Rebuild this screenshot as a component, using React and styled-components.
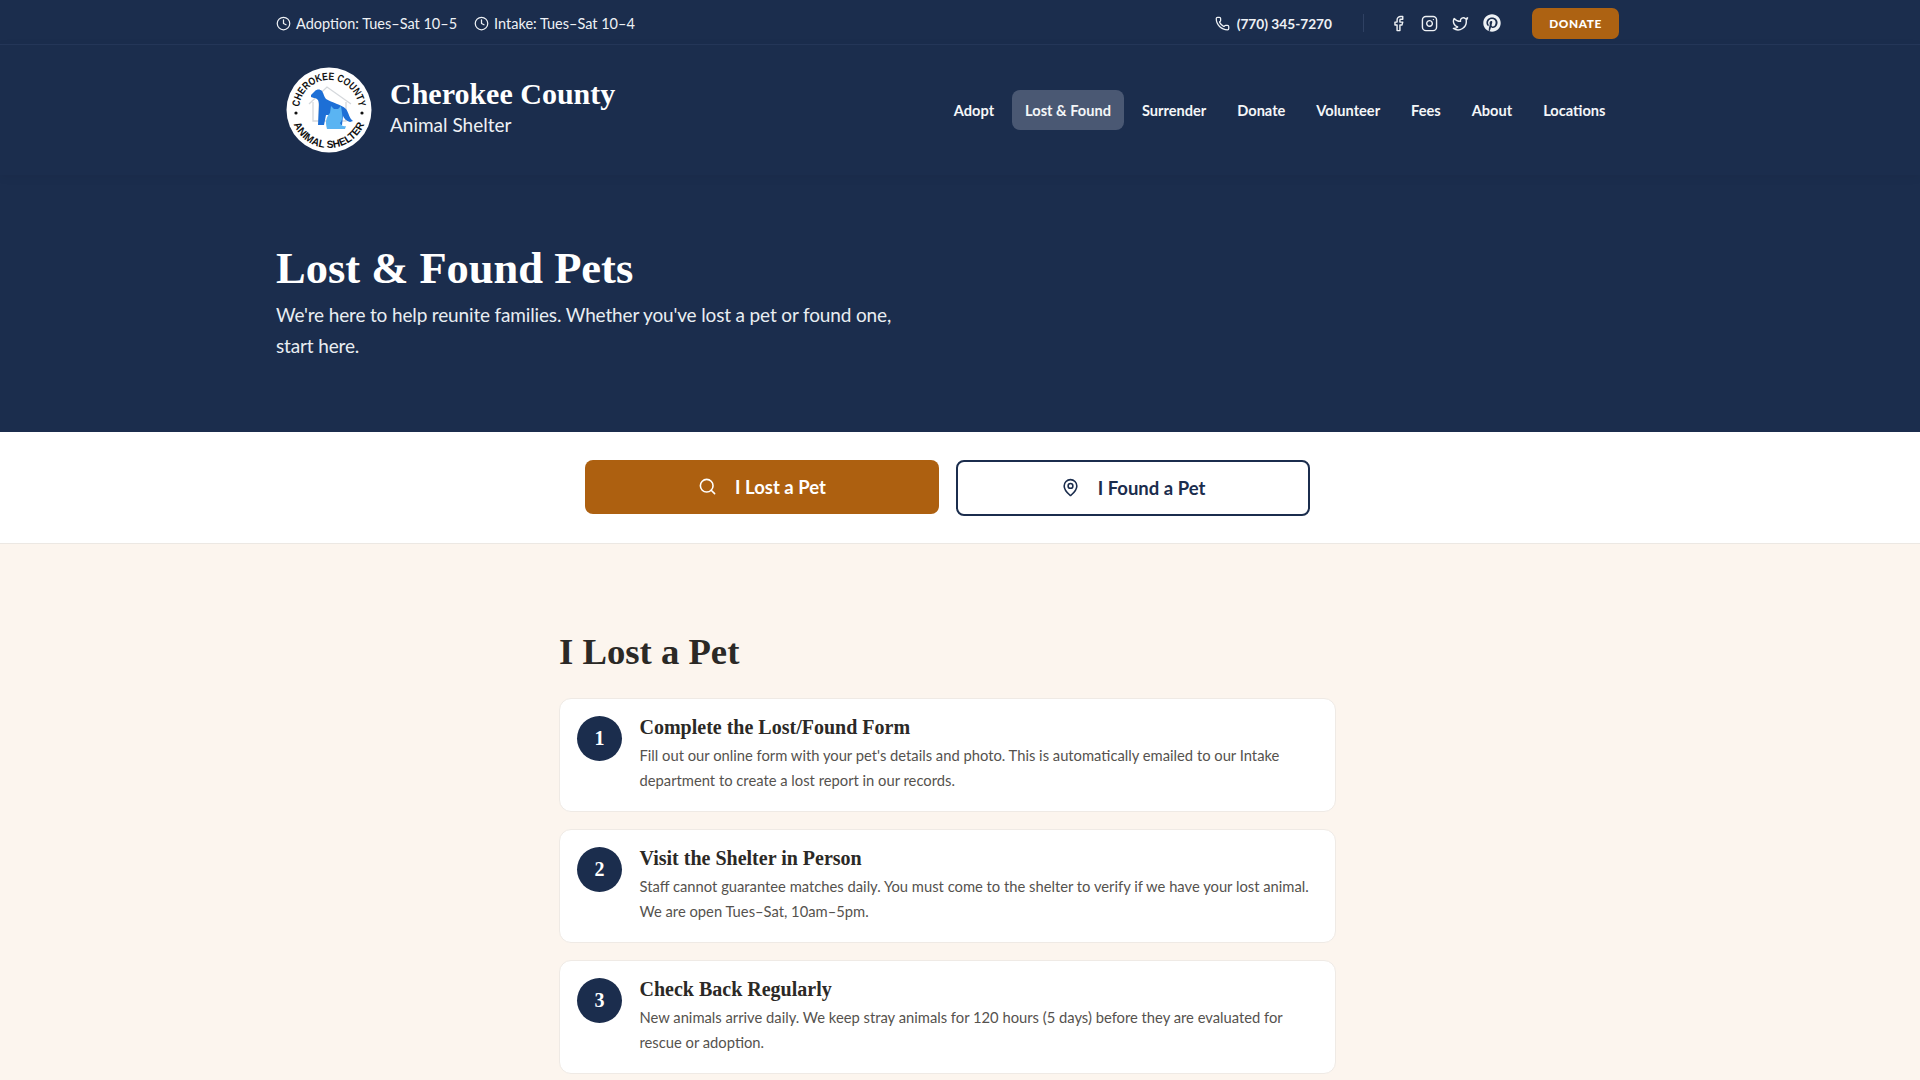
import React from "react";
import styled, { createGlobalStyle } from "styled-components";
import { Clock, Phone, Facebook, Instagram, Twitter, Search, MapPin } from "lucide-react";
import { FaPinterest } from "react-icons/fa";

const SANS = `"Lato", "Liberation Sans", sans-serif`;
const SERIF = `"Liberation Serif", "DejaVu Serif", serif`;

const Global = createGlobalStyle`
  html, body { margin: 0; padding: 0; background: #fcf5ee; }
  body { font-family: ${SANS}; height: 1080px; overflow: hidden; }
  * { box-sizing: border-box; }
`;

const Navy = styled.div`
  background: #1b2d4d;
  color: #fff;
`;

const TopBar = styled.div`
  height: 45px;
  border-bottom: 1px solid #25375a;
  padding: 2px 301px 0 276px;
  display: flex;
  align-items: center;
  justify-content: space-between;
`;

const TopGroup = styled.div`
  display: flex;
  align-items: center;
`;

const TopItem = styled.span`
  display: flex;
  align-items: center;
  gap: ${(p) => (p.$phone ? 7 : 5)}px;
  font-size: ${(p) => (p.$phone ? 13.7 : 14.5)}px;
  color: #eef1f5;
  margin-right: ${(p) => p.$mr || 0}px;
  font-weight: ${(p) => (p.$phone ? 700 : 400)};
`;

const Divider = styled.span`
  width: 1px;
  height: 18px;
  background: #2f4163;
  margin: 0 19px 0 31px;
`;

const Social = styled.a`
  width: 31px;
  display: flex;
  justify-content: center;
  color: #eef1f5;
`;

const DonateBtn = styled.button`
  width: 87px;
  height: 31px;
  margin-left: 25px;
  border: none;
  border-radius: 7px;
  background: #ad6212;
  color: #fff;
  font-family: ${SANS};
  font-size: 11.8px;
  font-weight: 900;
  letter-spacing: 0.6px;
`;

const Header = styled.header`
  height: 130px;
  padding: 0 301px 0 276px;
  display: flex;
  align-items: center;
  justify-content: space-between;
  box-shadow: 0 2px 10px rgba(0, 0, 0, 0.06);
`;

const Brand = styled.div`
  display: flex;
  align-items: center;
  gap: 18px;
  padding-left: 10px;
`;

const BrandText = styled.div`
  padding-bottom: 8px;
`;

const BrandName = styled.div`
  font-family: ${SERIF};
  font-weight: 700;
  font-size: 30px;
  line-height: 38px;
`;

const BrandSub = styled.div`
  font-size: 19px;
  line-height: 24px;
  color: #eef1f5;
`;

const Nav = styled.nav`
  display: flex;
  align-items: center;
  gap: 4px;
`;

const NavLink = styled.a`
  height: 40px;
  padding: 0 13.5px;
  border-radius: 8px;
  display: flex;
  align-items: center;
  font-size: 14.6px;
  font-weight: 700;
  color: #f4f6f8;
  background: ${(p) => (p.$active ? "#4a5873" : "transparent")};
`;

const Hero = styled.section`
  height: 257px;
  padding: 65px 276px 0;
`;

const HeroTitle = styled.h1`
  margin: 0;
  font-family: ${SERIF};
  font-size: 44.5px;
  line-height: 56px;
  font-weight: 700;
`;

const HeroText = styled.p`
  margin: 3px 0 0;
  width: 640px;
  font-size: 19px;
  letter-spacing: -0.15px;
  line-height: 31px;
  color: #e9edf2;
`;

const TabBar = styled.div`
  height: 112px;
  background: #fff;
  border-bottom: 1px solid #ece8e3;
  display: flex;
  align-items: center;
  justify-content: center;
  gap: 17px;
  padding-right: 25px;
`;

const TabButton = styled.button`
  width: 354px;
  height: ${(p) => (p.$primary ? 54 : 56)}px;
  margin-top: ${(p) => (p.$primary ? -2 : 0)}px;
  border-radius: 8px;
  border: ${(p) => (p.$primary ? "none" : "2px solid #1b2d4d")};
  background: ${(p) => (p.$primary ? "#ad6010" : "#fff")};
  color: ${(p) => (p.$primary ? "#fff" : "#1b2d4d")};
  display: flex;
  align-items: center;
  justify-content: center;
  gap: 18px;
  font-family: ${SANS};
  font-size: 18.5px;
  font-weight: 700;
`;

const Main = styled.main`
  width: 777px;
  margin-left: 559px;
  padding-top: 82px;
`;

const SectionTitle = styled.h2`
  margin: 0 0 20px;
  font-family: ${SERIF};
  font-size: 36.7px;
  line-height: 52px;
  font-weight: 700;
  color: #2b2926;
`;

const Steps = styled.div`
  display: flex;
  flex-direction: column;
  gap: 17px;
`;

const StepCard = styled.article`
  height: 114px;
  background: #fff;
  border: 1px solid #efeae5;
  border-radius: 12px;
  padding: 17px 15px 0 17px;
  display: flex;
  gap: 17.5px;
`;

const StepNumber = styled.div`
  flex: none;
  width: 45px;
  height: 45px;
  border-radius: 50%;
  background: #1b2d4d;
  color: #fff;
  display: flex;
  align-items: center;
  justify-content: center;
  font-family: ${SERIF};
  font-size: 20px;
  font-weight: 700;
`;

const StepTitle = styled.h3`
  margin: -1px 0 0;
  font-family: ${SERIF};
  font-size: 20px;
  line-height: 24px;
  font-weight: 700;
  color: #2b2926;
`;

const StepText = styled.p`
  margin: 4px 0 0;
  font-size: 14.75px;
  line-height: 25px;
  color: #55524e;
`;

const Logo = () => (
  <svg width="86" height="86" viewBox="0 0 86 86">
    <defs>
      <path id="arcTop" d="M13 43 A30 30 0 0 1 73 43" />
      <path id="arcBottom" d="M5 43 A38 38 0 0 0 81 43" />
    </defs>
    <circle cx="43" cy="43" r="42.5" fill="#fff" />
    <path d="M23 37 L41 20 L65 37 M27 35 V54 H60 V35 M33 30 V54" fill="none" stroke="#d5d8dc" strokeWidth="1.3" />
    <path
      d="M25 28 L29 24 C31 22 34 22 36 24 C38 27 38 30 40 32 C46 36 55 37 60 42 C63 46 63 51 67 54 L64 55 C60 54 58 51 57 49 L56 58 H50 L48 48 L40 48 L38 58 H32 L33 38 C33 33 31 31 28 31 L25 30 Z"
      fill="#1d6fd6"
    />
    <path
      d="M44 46 L45 39 L48 42 H52 L55 39 L56 46 C57 50 56 54 54 56 C55 58 57 60 60 59 L59 62 H41 C39 55 40 50 44 46 Z"
      fill="#5ab4f2"
    />
    <text fontFamily="Liberation Sans" fontSize="10.5" fontWeight="700" fill="#111">
      <textPath href="#arcTop" startOffset="50%" textAnchor="middle" textLength="88" lengthAdjust="spacingAndGlyphs">CHEROKEE COUNTY</textPath>
    </text>
    <text fontFamily="Liberation Sans" fontSize="10.5" fontWeight="700" fill="#111">
      <textPath href="#arcBottom" startOffset="50%" textAnchor="middle" textLength="90" lengthAdjust="spacingAndGlyphs">ANIMAL SHELTER</textPath>
    </text>
    <circle cx="10" cy="46" r="1.6" fill="#111" />
    <circle cx="76" cy="46" r="1.6" fill="#111" />
  </svg>
);

const navItems = ["Adopt", "Lost & Found", "Surrender", "Donate", "Volunteer", "Fees", "About", "Locations"];

const steps = [
  {
    title: "Complete the Lost/Found Form",
    lines: "Fill out our online form with your pet's details and photo. This is automatically emailed to our Intake department to create a lost report in our records.",
  },
  {
    title: "Visit the Shelter in Person",
    lines: "Staff cannot guarantee matches daily. You must come to the shelter to verify if we have your lost animal. We are open Tues–Sat, 10am–5pm.",
  },
  {
    title: "Check Back Regularly",
    lines: "New animals arrive daily. We keep stray animals for 120 hours (5 days) before they are evaluated for rescue or adoption.",
  },
];

export default function App() {
  return (
    <>
      <Global />
      <Navy>
        <TopBar>
          <TopGroup>
            <TopItem $mr={17}><Clock size={15} />Adoption: Tues–Sat 10–5</TopItem>
            <TopItem><Clock size={15} />Intake: Tues–Sat 10–4</TopItem>
          </TopGroup>
          <TopGroup>
            <TopItem $phone><Phone size={15} />(770) 345-7270</TopItem>
            <Divider />
            <Social><Facebook size={17} /></Social>
            <Social><Instagram size={17} /></Social>
            <Social><Twitter size={17} /></Social>
            <Social><FaPinterest size={18} /></Social>
            <DonateBtn>DONATE</DonateBtn>
          </TopGroup>
        </TopBar>
        <Header>
          <Brand>
            <Logo />
            <BrandText>
              <BrandName>Cherokee County</BrandName>
              <BrandSub>Animal Shelter</BrandSub>
            </BrandText>
          </Brand>
          <Nav>
            {navItems.map((item) => (
              <NavLink key={item} $active={item === "Lost & Found"}>{item}</NavLink>
            ))}
          </Nav>
        </Header>
        <Hero>
          <HeroTitle>Lost &amp; Found Pets</HeroTitle>
          <HeroText>We're here to help reunite families. Whether you've lost a pet or found one, start here.</HeroText>
        </Hero>
      </Navy>
      <TabBar>
        <TabButton $primary><Search size={19} />I Lost a Pet</TabButton>
        <TabButton><MapPin size={19} />I Found a Pet</TabButton>
      </TabBar>
      <Main>
        <SectionTitle>I Lost a Pet</SectionTitle>
        <Steps>
          {steps.map((step, i) => (
            <StepCard key={step.title}>
              <StepNumber>{i + 1}</StepNumber>
              <div>
                <StepTitle>{step.title}</StepTitle>
                <StepText>{step.lines}</StepText>
              </div>
            </StepCard>
          ))}
        </Steps>
      </Main>
    </>
  );
}
